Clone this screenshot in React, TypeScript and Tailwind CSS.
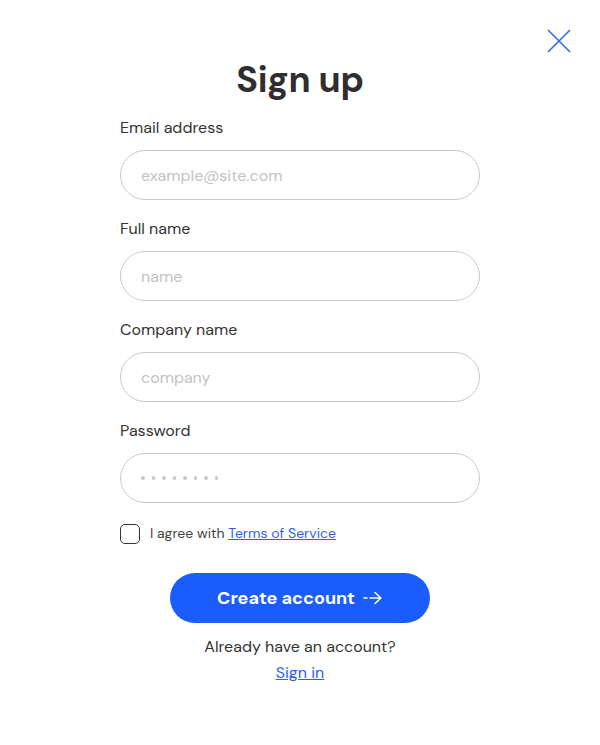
import React, { useState } from 'react';

const font = { fontFamily: '"DM Sans", Inter, "Liberation Sans", sans-serif' };

function Field({ label, placeholder, type = 'text' }: { label: string; placeholder: string; type?: string }) {
  return (
    <div className="flex flex-col">
      <label className="text-[16px] leading-[20px] text-[#333333] mb-[12px]">{label}</label>
      <input
        type={type}
        placeholder={placeholder}
        className="w-[360px] h-[50px] rounded-full border border-[#c8c8c8] px-[20px] text-[16px] text-[#333333] placeholder:text-[#c2c2c2] outline-none bg-white"
      />
    </div>
  );
}

export default function App() {
  const [agree, setAgree] = useState(false);

  return (
    <div className="min-h-[745px] w-[600px] bg-white relative" style={font}>
      {/* close */}
      <button className="absolute left-[546px] top-[28px] w-[26px] h-[26px] flex items-center justify-center">
        <svg width="24" height="24" viewBox="0 0 24 24" fill="none" stroke="#3366ee" strokeWidth="1.6">
          <path d="M1 1 L23 23 M23 1 L1 23" />
        </svg>
      </button>

      <div className="flex flex-col items-center pt-[56px]">
        <h1 className="text-[36px] leading-[48px] font-bold text-[#2f2f2f] tracking-[-0.3px]">Sign up</h1>

        <div className="flex flex-col gap-[19px] mt-[14px]">
          <Field label="Email address" placeholder="example@site.com" type="email" />
          <Field label="Full name" placeholder="name" />
          <Field label="Company name" placeholder="company" />
          <div className="flex flex-col">
            <label className="text-[16px] leading-[20px] text-[#333333] mb-[12px]">Password</label>
            <div className="w-[360px] h-[50px] rounded-full border border-[#c8c8c8] px-[20px] flex items-center gap-[7px]">
              {Array.from({ length: 8 }).map((_, i) => (
                <span key={i} className="w-[3.5px] h-[3.5px] rounded-full bg-[#c8c8c8]" />
              ))}
            </div>
          </div>
        </div>

        <label className="w-[360px] flex items-center gap-[10px] mt-[20px] cursor-pointer">
          <span
            onClick={() => setAgree(!agree)}
            className="w-[20px] h-[20px] rounded-[5px] border-[1.5px] border-[#333333] bg-white flex items-center justify-center"
          >
            {agree && <span className="w-[10px] h-[10px] rounded-[2px] bg-[#1b5cfc]" />}
          </span>
          <span className="text-[14px] text-[#444444]">
            I agree with <a href="#" className="text-[#2b62e0] underline">Terms of Service</a>
          </span>
        </label>

        <button className="mt-[29px] w-[260px] h-[50px] rounded-full bg-[#1b5cfc] text-white text-[18px] font-bold flex items-center justify-center gap-[8px]">
          Create account
          <svg width="20" height="14" viewBox="0 0 20 14" fill="none" stroke="white" strokeWidth="1.6" strokeLinecap="round" strokeLinejoin="round">
            <path d="M1 7 H4 M7 7 H18 M12 1.5 L18 7 L12 12.5" />
          </svg>
        </button>

        <p className="mt-[14px] text-[16px] leading-[20px] text-[#333333]">Already have an account?</p>
        <a href="#" className="mt-[6px] text-[16px] leading-[20px] text-[#2b62e0] underline">Sign in</a>
      </div>
    </div>
  );
}
